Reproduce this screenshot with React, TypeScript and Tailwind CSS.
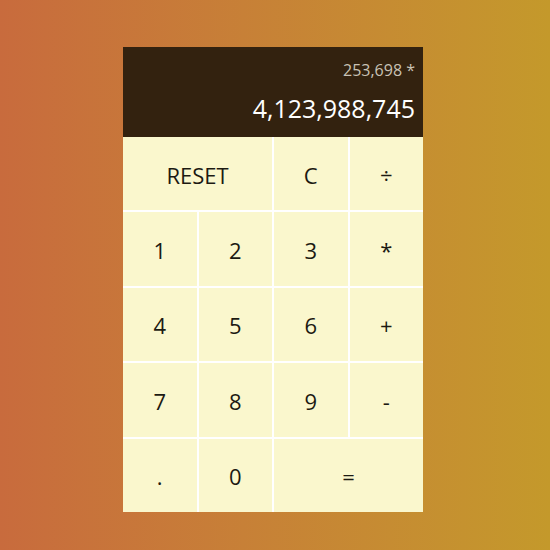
const KEYS: { label: string; span?: string }[] = [
  { label: "RESET", span: "col-span-2" },
  { label: "C" },
  { label: "÷" },
  { label: "1" },
  { label: "2" },
  { label: "3" },
  { label: "*" },
  { label: "4" },
  { label: "5" },
  { label: "6" },
  { label: "+" },
  { label: "7" },
  { label: "8" },
  { label: "9" },
  { label: "-" },
  { label: "." },
  { label: "0" },
  { label: "=", span: "col-span-2" },
];

export default function App() {
  return (
    <div
      className="flex h-[550px] w-[550px] bg-gradient-to-r from-[#c86b3d] to-[#c4992b] pl-[123px] pt-[47px]"
      style={{ fontFamily: '"Open Sans", "Noto Sans", sans-serif' }}
    >
      <div className="flex h-[465px] w-[300px] flex-col">
        <div className="flex h-[90px] flex-col items-end justify-end bg-[#33220f] px-[8px] pb-[12px]">
          <div className="text-[16px] leading-[20px] text-[#c9c2b5]">253,698 *</div>
          <div className="mt-[11px] text-[25px] leading-[34px] text-white">4,123,988,745</div>
        </div>
        <div className="grid flex-1 grid-cols-4 grid-rows-5 gap-[2px] bg-white">
          {KEYS.map((k) => (
            <button
              key={k.label}
              className={`flex items-center justify-center bg-[#faf7cd] pt-[3px] text-[22px] text-[#1c1a12] ${k.span ?? ""}`}
            >
              {k.label}
            </button>
          ))}
        </div>
      </div>
    </div>
  );
}
